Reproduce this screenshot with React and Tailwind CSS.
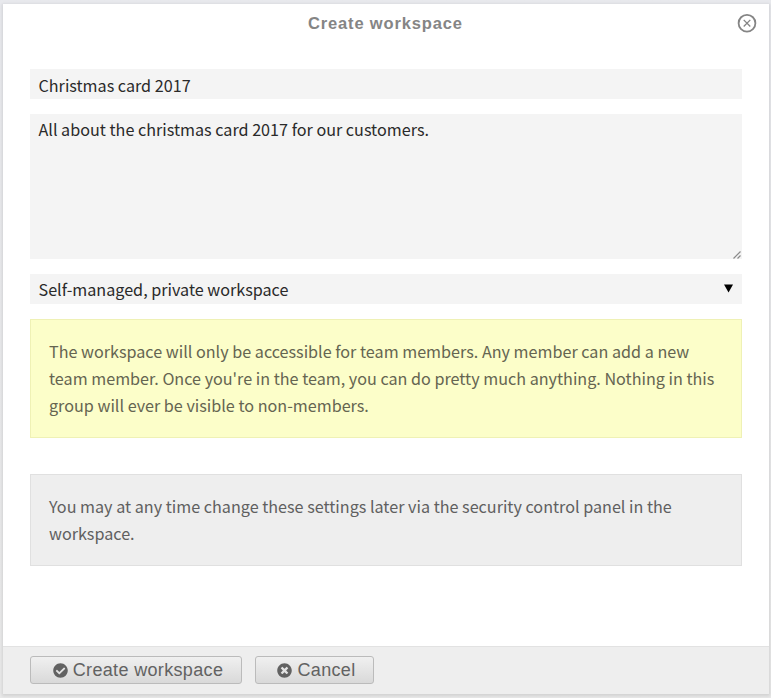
import { FaCheckCircle, FaTimesCircle } from "react-icons/fa";

const bodyFont = "font-['Noto_Sans_CJK_SC','Noto_Sans',sans-serif]";
const uiFont = "font-['Liberation_Sans',Arial,sans-serif]";

function Button({ icon, label, className }) {
  return (
    <button
      type="button"
      className={`flex h-7 items-center justify-center rounded-[3px] border border-[#bbb] bg-linear-to-b from-[#f0f0f0] to-[#d9d9d9] text-[#626262] ${className}`}
    >
      {icon}
      <span className={`ml-[5px] whitespace-nowrap text-[18px] leading-[26px] tracking-[0.34px] ${uiFont}`}>
        {label}
      </span>
    </button>
  );
}

function Notice({ lines, className }) {
  return (
    <div className={`border px-[18px] text-[16.16px] leading-[27px] ${className}`}>
      {lines.map((line) => (
        <p key={line} className="whitespace-nowrap">{line}</p>
      ))}
    </div>
  );
}

export default function App() {
  return (
    <div className={`h-[698px] w-[771px] overflow-hidden bg-linear-to-b from-[#e8e9ed] to-[#e9e9e9] pl-[3px] pt-[4px] ${bodyFont}`}>
      <section className="flex h-[690px] w-[766px] flex-col bg-white shadow-[0_1px_3px_1px_rgba(0,0,0,0.1)]">
        <header className="flex h-[65px] items-start pl-[27px] pr-[12px]">
          <h1 className={`ml-[278px] mt-[7px] whitespace-nowrap text-[16.5px] font-bold leading-6 tracking-[0.84px] text-[#858585] ${uiFont}`}>
            Create workspace
          </h1>
          <svg className="ml-auto mt-[9px] size-5" viewBox="0 0 20 20" fill="none" stroke="#858585">
            <circle cx="10" cy="10.2" r="8.4" strokeWidth="1.8" />
            <path d="M6.7 6.9l6.6 6.6M13.3 6.9l-6.6 6.6" strokeWidth="1.3" />
          </svg>
        </header>

        <main className="flex grow flex-col px-[27px] text-[16.17px] text-[#2a2a2a]">
          <div className="h-[30px] w-[712px] bg-[#f4f4f4] pl-[8.5px] leading-8">
            <span className="whitespace-nowrap">Christmas card 2017</span>
          </div>
          <div className="mt-[15px] flex h-[145px] w-[712px] justify-between bg-[#f4f4f4] pl-[8.5px]">
            <span className="whitespace-nowrap leading-[30px]">
              All about the christmas card 2017 for our customers.
            </span>
            <svg className="mr-px size-2 self-end" viewBox="0 0 8 8" stroke="#8a8a8a" strokeWidth="1.2">
              <path d="M0.5 7.5L7.5 0.5M4.5 7.5L7.5 4.5" />
            </svg>
          </div>
          <div className="mt-[15px] flex h-[30px] w-[712px] justify-between bg-[#f4f4f4] pl-[8.5px] pr-[9px]">
            <span className="whitespace-nowrap leading-[31px]">Self-managed, private workspace</span>
            <svg className="mt-[10px] h-[9px] w-[9px]" viewBox="0 0 9 9">
              <path d="M0 0.5h9L4.5 8.5z" fill="#000" />
            </svg>
          </div>
          <Notice
            className="mt-[15px] h-[119px] w-[712px] border-[#eff1b5] bg-[#fcfec9] pt-[18px] text-[#656551]"
            lines={[
              "The workspace will only be accessible for team members. Any member can add a new",
              "team member. Once you're in the team, you can do pretty much anything. Nothing in this",
              "group will ever be visible to non-members.",
            ]}
          />
          <Notice
            className="mt-[36px] h-[92px] w-[712px] border-[#e0e0e0] bg-[#eee] pt-[18px] text-[#606060]"
            lines={[
              "You may at any time change these settings later via the security control panel in the",
              "workspace.",
            ]}
          />
        </main>

        <footer className="flex h-12 items-start gap-[13px] border-t border-[#e2e2e2] bg-[#eee] pl-[27px] pt-[9px]">
          <Button className="w-[212px] pl-[4px]" label="Create workspace" icon={<FaCheckCircle className="size-[15px]" />} />
          <Button className="w-[119px] pl-[4px]" label="Cancel" icon={<FaTimesCircle className="size-[15px]" />} />
        </footer>
      </section>
    </div>
  );
}
